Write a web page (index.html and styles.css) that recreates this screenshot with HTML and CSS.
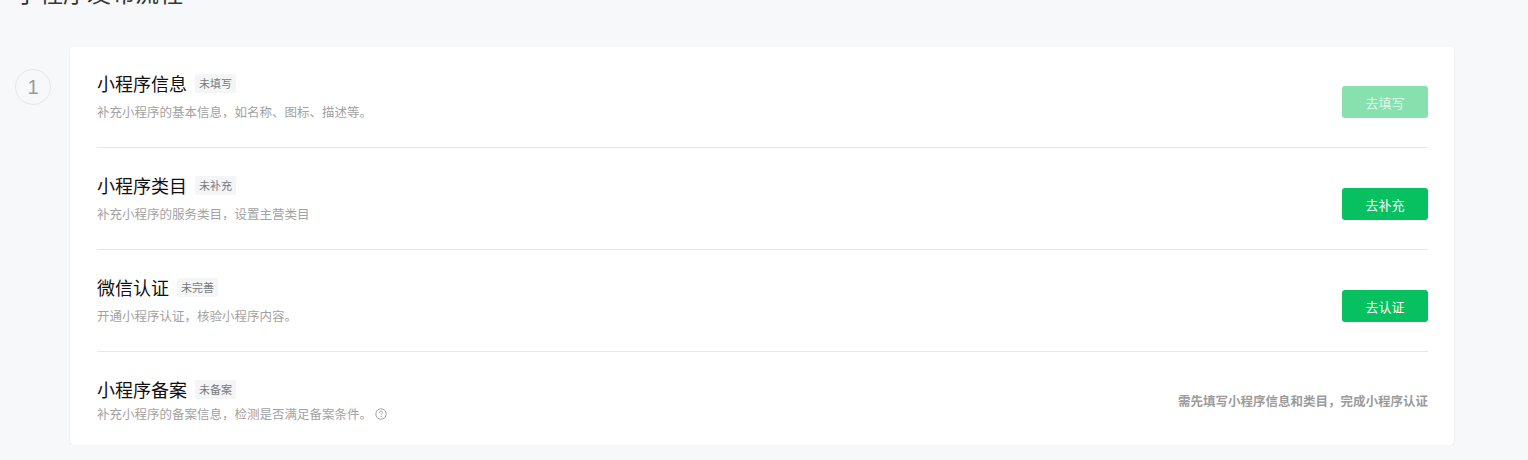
FILE: index.html
```html
<!DOCTYPE html>
<html lang="zh-CN">
<head>
<meta charset="utf-8">
<title>小程序发布流程</title>
<link rel="stylesheet" href="styles.css">
</head>
<body>
<div class="page">
  <h2 class="page-title">小程序发布流程</h2>
  <div class="step">
    <div class="step-num">1</div>
    <div class="card">
      <div class="row row-first">
        <div class="info">
          <div class="title-line"><span class="title">小程序信息</span><span class="tag">未填写</span></div>
          <div class="desc">补充小程序的基本信息，如名称、图标、描述等。</div>
        </div>
        <button class="btn btn-disabled">去填写</button>
      </div>
      <div class="row">
        <div class="info">
          <div class="title-line"><span class="title">小程序类目</span><span class="tag">未补充</span></div>
          <div class="desc">补充小程序的服务类目，设置主营类目</div>
        </div>
        <button class="btn">去补充</button>
      </div>
      <div class="row">
        <div class="info">
          <div class="title-line"><span class="title">微信认证</span><span class="tag">未完善</span></div>
          <div class="desc">开通小程序认证，核验小程序内容。</div>
        </div>
        <button class="btn">去认证</button>
      </div>
      <div class="row row-last">
        <div class="info">
          <div class="title-line"><span class="title">小程序备案</span><span class="tag">未备案</span></div>
          <div class="desc">补充小程序的备案信息，检测是否满足备案条件。<svg class="help" width="12" height="12" viewBox="0 0 12 12"><circle cx="6" cy="6" r="5.2" fill="none" stroke="#9a9a9a" stroke-width="0.9"/><path d="M4.4 4.7 C4.4 3.7 5.1 3.2 6 3.2 C6.9 3.2 7.6 3.7 7.6 4.5 C7.6 5.5 6.2 5.6 6.2 6.8" fill="none" stroke="#9a9a9a" stroke-width="0.9" stroke-linecap="round"/><circle cx="6.2" cy="8.6" r="0.55" fill="#9a9a9a"/></svg></div>
        </div>
        <div class="hint">需先填写小程序信息和类目，完成小程序认证</div>
      </div>
    </div>
  </div>
</div>
</body>
</html>
```
FILE: styles.css
```css
html, body {
  margin: 0;
  padding: 0;
  background: #f7f8fa;
  overflow: hidden;
}
body {
  font-family: "Noto Sans CJK SC", "Noto Sans", "Liberation Sans", sans-serif;
  color: #1a1a1a;
}
.page {
  padding: 0 74px 0 15px;
}
.page-title {
  margin: -25px 0 0 0;
  font-size: 24px;
  line-height: 34px;
  font-weight: 400;
  color: #353535;
}
.step {
  display: flex;
  align-items: flex-start;
  margin-top: 38px;
}
.step-num {
  flex: none;
  width: 34px;
  height: 34px;
  margin-top: 22px;
  border: 1px solid #e4e6ea;
  border-radius: 50%;
  display: flex;
  align-items: center;
  justify-content: center;
  font-family: "Liberation Sans", "Noto Sans", sans-serif;
  font-size: 20px;
  color: #9a9a9a;
}
.card {
  flex: 1;
  margin-left: 19px;
  background: #fff;
  border-radius: 4px;
  box-shadow: 0 1px 2px rgba(0, 0, 0, 0.1);
  padding: 0 26px 0 27px;
}
.row {
  display: flex;
  align-items: center;
  justify-content: space-between;
  padding: 25px 0;
  border-bottom: 1px solid #e6e6e6;
}
.row-first {
  padding-top: 24px;
}
.row-last {
  border-bottom: none;
  padding-bottom: 21px;
}
.title-line {
  display: flex;
  align-items: center;
  height: 25px;
}
.title {
  font-size: 18px;
  line-height: 25px;
  color: #111;
}
.tag {
  margin-left: 8px;
  padding: 0 4px;
  height: 19px;
  line-height: 19px;
  font-size: 11px;
  color: #7a7a7a;
  background: #f4f5f7;
  border-radius: 2px;
  margin-top: -1px;
}
.desc {
  margin-top: 6px;
  font-size: 12.5px;
  line-height: 20px;
  color: #a2a2a2;
  display: flex;
  align-items: center;
}
.row-last .desc {
  margin-top: 2px;
}
.help {
  margin-left: 3px;
}
.btn {
  flex: none;
  width: 86px;
  height: 32px;
  margin-top: 11px;
  border: none;
  border-radius: 3px;
  background: #07c160;
  color: #fff;
  font-family: "Noto Sans CJK SC", sans-serif;
  font-size: 13px;
  padding: 0;
}
.btn-disabled {
  background: #86e1af;
  color: rgba(255, 255, 255, 0.75);
}
.hint {
  font-size: 12.5px;
  font-weight: 700;
  color: #9c9c9c;
  line-height: 20px;
}
```
